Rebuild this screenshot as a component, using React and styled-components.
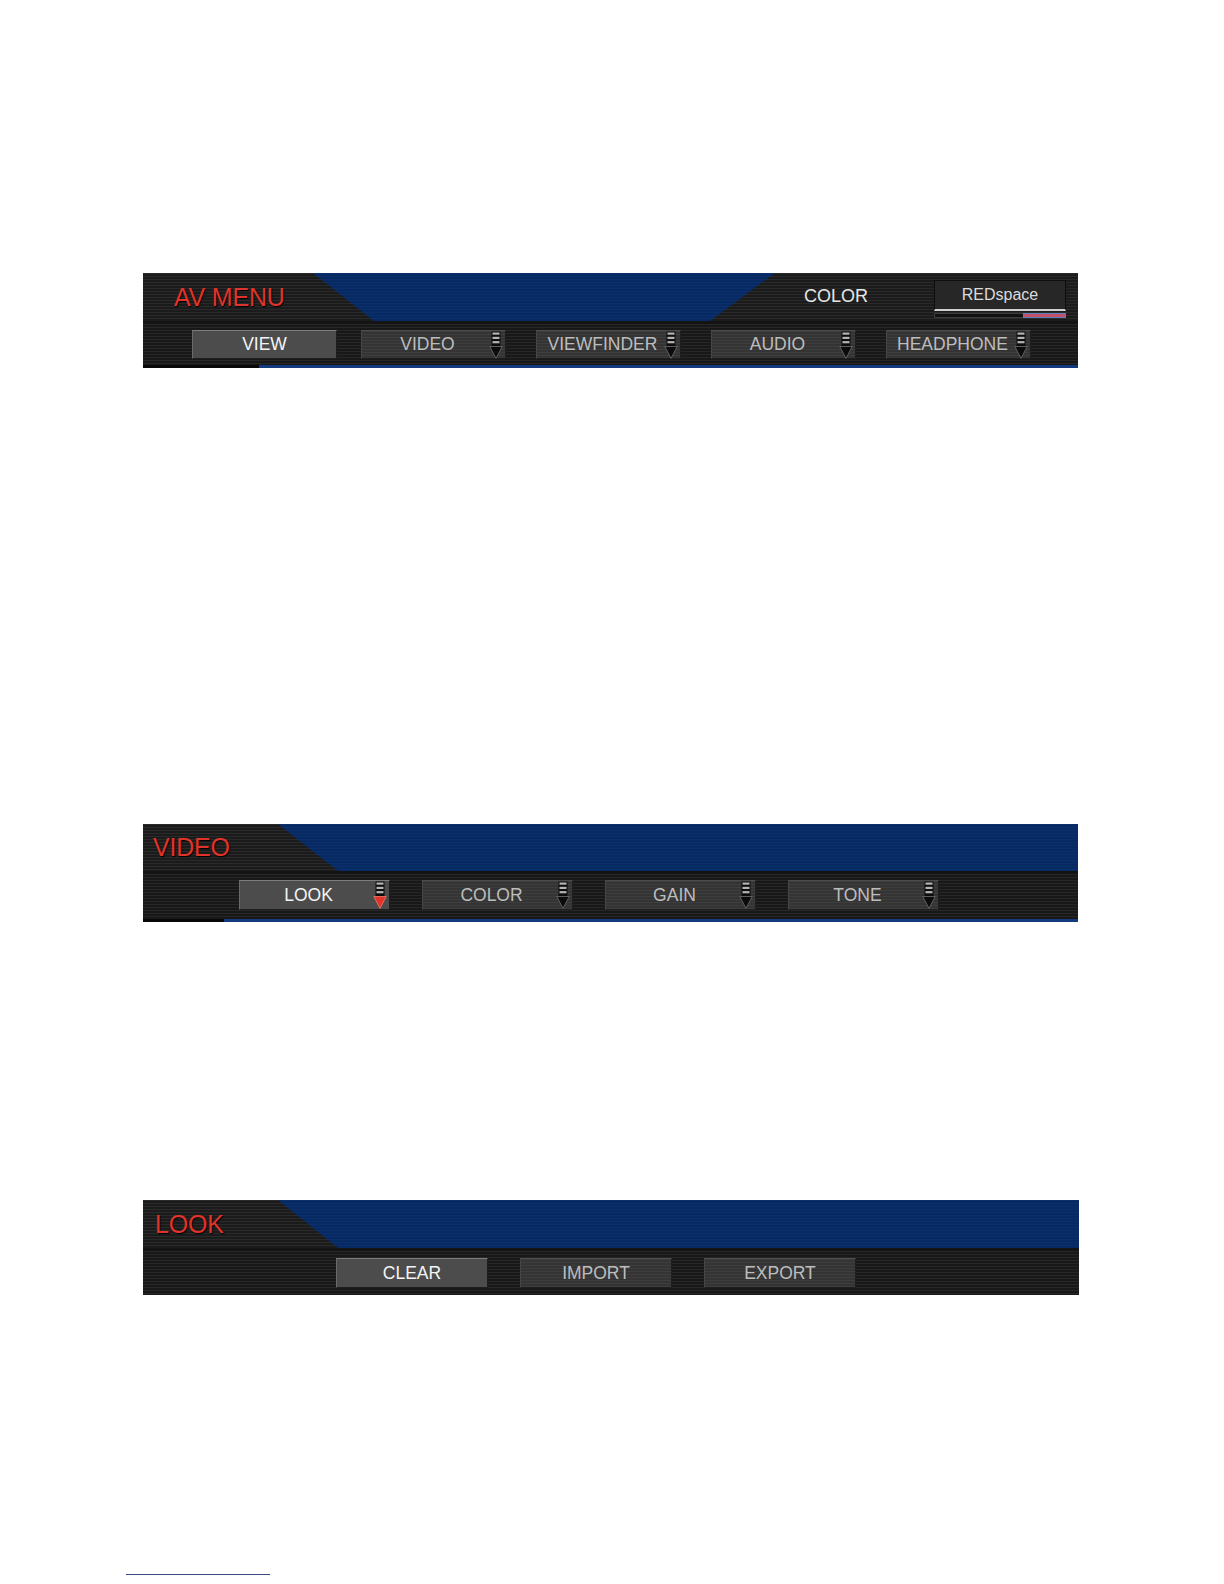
import React from 'react'
import styled, { createGlobalStyle } from 'styled-components'

const GlobalStyle = createGlobalStyle`
  html, body {
    margin: 0;
    padding: 0;
    background: #ffffff;
  }
  body {
    font-family: "Liberation Sans", Arial, sans-serif;
  }
`

const stripes = (a, b) => `repeating-linear-gradient(to bottom, ${a} 0px, ${a} 1px, ${b} 1px, ${b} 3px)`

const Page = styled.div`
  padding-top: 273px;
  padding-bottom: 9px;
  display: flex;
  flex-direction: column;
`

const Panel = styled.div`
  margin-left: 143px;
  margin-top: ${p => p.top || 0}px;
  width: ${p => p.width || 935}px;
  background: ${stripes('#2a2a2a', '#1b1b1b')};
  display: flex;
  flex-direction: column;
`

const Header = styled.div`
  height: ${p => p.h}px;
  display: flex;
  align-items: stretch;
`

const TitleCell = styled.div`
  width: ${p => p.w}px;
  flex-shrink: 0;
  display: flex;
  align-items: center;
  padding-left: ${p => p.pad}px;
  box-sizing: border-box;
`

const Title = styled.div`
  color: #e0342a;
  font-size: 25px;
  letter-spacing: -0.2px;
  text-shadow: 1px 1px 1px #000;
  white-space: nowrap;
  position: relative;
  z-index: 1;
`

const BlueShape = styled.div`
  flex: ${p => (p.w ? `0 0 ${p.w}px` : '1')};
  background: ${stripes('#0b2f6b', '#082a62')};
  clip-path: ${p => p.clip};
`

const RightCell = styled.div`
  flex: 1;
  display: flex;
  align-items: flex-start;
  padding-top: 7px;
  padding-right: 12px;
  box-sizing: border-box;
`

const ColorLabel = styled.div`
  color: #e6e6e6;
  font-size: 18px;
  margin-left: 29px;
  margin-top: 6px;
  flex: 1;
`

const SpaceWrap = styled.div`
  width: 132px;
  display: flex;
  flex-direction: column;
  gap: 2px;
`

const SpaceBox = styled.div`
  height: 28px;
  background: #272727;
  border: 1px solid #0e0e0e;
  border-bottom: 2px solid #cfcfcf;
  color: #dcdcdc;
  font-size: 16px;
  display: flex;
  align-items: center;
  justify-content: center;
`

const SpaceTrack = styled.div`
  height: 3px;
  background: #111;
  border: 1px solid #3c3c3c;
  display: flex;
  justify-content: flex-end;
`

const SpaceFill = styled.div`
  width: 41px;
  background: #c2506b;
  outline: 1px solid #5f7fb8;
`

const ButtonRow = styled.div`
  display: flex;
  gap: ${p => p.gap}px;
  padding: ${p => p.py[0]}px 0 ${p => p.py[1]}px ${p => p.pad}px;
  border-top: 3px solid #141414;
  background: ${stripes('#272727', '#181818')};
`

const Button = styled.div`
  width: ${p => p.w}px;
  height: ${p => p.h}px;
  margin-right: ${p => p.shift || 0}px;
  box-sizing: border-box;
  display: flex;
  align-items: center;
  padding-right: ${p => (p.drop ? 2 : 0)}px;
  background: ${p => (p.active ? '#4c4c4c' : stripes('#3e3e3e', '#343434'))};
  border: 1px solid #1e1e1e;
  border-top-color: ${p => (p.active ? '#7d7d7d' : '#4c4c4c')};
  border-left-color: ${p => (p.active ? '#6a6a6a' : '#464646')};
  color: ${p => (p.active ? '#f4f4f4' : '#bdbdbd')};
  font-size: 17.5px;
`

const ButtonText = styled.span`
  flex: 1;
  text-align: center;
  padding-left: ${p => (p.drop ? 4 : 0)}px;
`

const BottomLine = styled.div`
  height: 3px;
  background: linear-gradient(to right, #080808 0px, #080808 ${p => p.black}px, #123a7c ${p => p.black}px);
`

const Rule = styled.div`
  margin-left: 126px;
  margin-top: 279px;
  width: 144px;
  height: 1px;
  background: #3b4a80;
`

const DropIcon = ({ active }) => (
  <svg width="14" height="28" viewBox="0 0 14 28" style={{ flexShrink: 0 }}>
    <rect x="2.5" y="0.5" width="9" height="15" fill="#0c0c0c" />
    <rect x="3.5" y="1.5" width="7" height="2.2" fill="#b4b4b4" />
    <rect x="3.5" y="5.8" width="7" height="2.2" fill="#b4b4b4" />
    <rect x="3.5" y="10.1" width="7" height="2.2" fill="#b4b4b4" />
    <polygon points="0.8,15.5 13.2,15.5 7,27.4" fill={active ? '#e2332b' : '#0c0c0c'} stroke={active ? '#f07a6a' : '#6e6e6e'} strokeWidth="0.8" />
  </svg>
)

const MenuButton = ({ label, active, drop, w, h, shift }) => (
  <Button active={active} drop={drop} w={w} h={h} shift={shift}>
    <ButtonText drop={drop}>{label}</ButtonText>
    {drop && <DropIcon active={active} />}
  </Button>
)

const avItems = ['VIEW', 'VIDEO', 'VIEWFINDER', 'AUDIO', 'HEADPHONE']
const videoItems = ['LOOK', 'COLOR', 'GAIN', 'TONE']
const lookItems = ['CLEAR', 'IMPORT', 'EXPORT']

export default function App() {
  return (
    <Page>
      <GlobalStyle />

      <Panel>
        <Header h={48}>
          <TitleCell w={170} pad={31}>
            <Title>AV MENU</Title>
          </TitleCell>
          <BlueShape w={462} clip="polygon(0 0, 100% 0, calc(100% - 65px) 100%, 61px 100%)" />
          <RightCell>
            <ColorLabel>COLOR</ColorLabel>
            <SpaceWrap>
              <SpaceBox>REDspace</SpaceBox>
              <SpaceTrack>
                <SpaceFill />
              </SpaceTrack>
            </SpaceWrap>
          </RightCell>
        </Header>
        <ButtonRow gap={30} pad={49} py={[6, 6]}>
          {avItems.map((item, i) => (
            <MenuButton key={item} label={item} active={i === 0} drop={i > 0} w={145} h={29} shift={i === 0 ? -6 : 0} />
          ))}
        </ButtonRow>
        <BottomLine black={116} />
      </Panel>

      <Panel top={456}>
        <Header h={47}>
          <TitleCell w={135} pad={10}>
            <Title>VIDEO</Title>
          </TitleCell>
          <BlueShape clip="polygon(0 0, 100% 0, 100% 100%, 60px 100%)" />
        </Header>
        <ButtonRow gap={32} pad={96} py={[6, 9]}>
          {videoItems.map((item, i) => (
            <MenuButton key={item} label={item} active={i === 0} drop w={151} h={30} />
          ))}
        </ButtonRow>
        <BottomLine black={81} />
      </Panel>

      <Panel top={278} width={936}>
        <Header h={48}>
          <TitleCell w={135} pad={12}>
            <Title>LOOK</Title>
          </TitleCell>
          <BlueShape clip="polygon(0 0, 100% 0, 100% 100%, 60px 100%)" />
        </Header>
        <ButtonRow gap={32} pad={193} py={[7, 7]}>
          {lookItems.map((item, i) => (
            <MenuButton key={item} label={item} active={i === 0} w={152} h={30} />
          ))}
        </ButtonRow>
      </Panel>

      <Rule />
    </Page>
  )
}
